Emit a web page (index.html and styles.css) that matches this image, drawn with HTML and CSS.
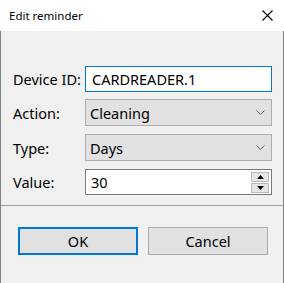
FILE: index.html
```html
<!DOCTYPE html>
<html>
  <head>
    <meta charset='utf-8'>
    <title>Edit reminder</title>
    <link rel="stylesheet" href="styles.css">
  </head>
  <body>
    <div class='window'>
      <div class='titlebar'>
        <span class='title'>Edit reminder</span>
        <svg class='close' width='11' height='11' viewBox='0 0 11 11'>
          <path d='M0.5 0.5 L10.5 10.5 M10.5 0.5 L0.5 10.5' stroke='#000' stroke-width='1.1' fill='none'/>
        </svg>
      </div>
      <div class='content'>
        <div class='form'>
          <div class='row'>
            <label>Device ID:</label>
            <div class='field text focused'>CARDREADER.1</div>
          </div>
          <div class='row'>
            <label>Action:</label>
            <div class='field combo'>
              <span>Cleaning</span>
              <svg class='chevron' width='9' height='5' viewBox='0 0 9 5'>
                <polyline points='0.5,0.5 4.5,4.5 8.5,0.5' stroke='#606060' fill='none'/>
              </svg>
            </div>
          </div>
          <div class='row'>
            <label>Type:</label>
            <div class='field combo'>
              <span>Days</span>
              <svg class='chevron' width='9' height='5' viewBox='0 0 9 5'>
                <polyline points='0.5,0.5 4.5,4.5 8.5,0.5' stroke='#606060' fill='none'/>
              </svg>
            </div>
          </div>
          <div class='row'>
            <label>Value:</label>
            <div class='field text spin'>
              <span>30</span>
              <div class='spinner'>
                <div class='spin-btn'>
                  <svg width='7' height='4' viewBox='0 0 7 4'><polygon points='0,4 7,4 3.5,0' fill='#000'/></svg>
                </div>
                <div class='spin-btn'>
                  <svg width='7' height='4' viewBox='0 0 7 4'><polygon points='0,0 7,0 3.5,4' fill='#000'/></svg>
                </div>
              </div>
            </div>
          </div>
        </div>
        <div class='buttons'>
          <div class='button default'>OK</div>
          <div class='button'>Cancel</div>
        </div>
      </div>
    </div>
  </body>
</html>
```

FILE: styles.css
```css
html, body {
  margin: 0;
  padding: 0;
  background-color: #f0f0f0;
}
body {
  font-family: "Noto Sans", "Open Sans", sans-serif;
  color: #000;
}
.window {
  width: 284px;
  height: 283px;
  display: flex;
  flex-direction: column;
  overflow: hidden;
}
.titlebar {
  height: 31px;
  background-color: #fff;
  display: flex;
  align-items: center;
  justify-content: space-between;
  padding: 0 11px 0 9px;
  box-sizing: border-box;
}
.title {
  font-size: 11.5px;
  margin-top: 0px;
}
.close {
  display: block;
}
.content {
  flex: 1;
  border-left: solid 1px #808080;
  border-right: solid 1px #808080;
  display: flex;
  flex-direction: column;
}
.form {
  height: 175px;
  box-sizing: border-box;
  padding: 35px 11px 0 12px;
  display: flex;
  flex-direction: column;
  row-gap: 8px;
  border-bottom: solid 1px #a0a0a0;
}
.row {
  display: flex;
  align-items: center;
  font-size: 14.5px;
}
.row:nth-child(2) { margin-top: -1px; }
label {
  width: 72px;
  flex: none;
}
.field {
  flex: 1;
  box-sizing: border-box;
  display: flex;
  align-items: center;
  padding-left: 5px;
}
.text {
  height: 26px;
  background-color: #fff;
  border: solid 1px #7a7a7a;
}
.focused {
  border-color: #0078d7;
  padding-left: 6px;
}
.combo {
  height: 27px;
  background-color: #e1e1e1;
  border: solid 1px #adadad;
  padding-left: 4px;
  justify-content: space-between;
  padding-right: 6px;
}
.chevron {
  display: block;
}
.spin {
  justify-content: space-between;
  padding-right: 2px;
}
.spinner {
  display: flex;
  flex-direction: column;
  row-gap: 1px;
}
.spin-btn {
  width: 18px;
  height: 10px;
  box-sizing: border-box;
  background-color: #e6e6e6;
  border: solid 1px #b9b9b9;
  display: flex;
  align-items: center;
  justify-content: center;
}
.spin-btn svg {
  display: block;
}
.buttons {
  display: flex;
  column-gap: 10px;
  padding: 21px 0 0 17px;
}
.button {
  width: 120px;
  height: 28px;
  box-sizing: border-box;
  background-color: #e1e1e1;
  border: solid 1px #adadad;
  display: flex;
  align-items: center;
  justify-content: center;
  font-size: 14.5px;
}
.default {
  border: solid 2px #0078d7;
}
```
